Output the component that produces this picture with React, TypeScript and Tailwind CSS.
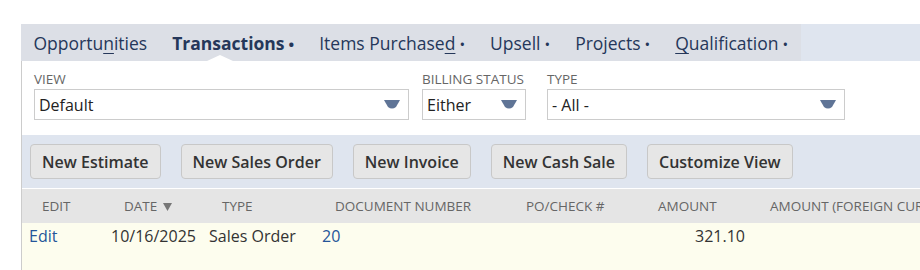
const tabs = [
  { pre: 'Opportu', u: 'n', post: 'ities', dot: false },
  { pre: 'Transactions', u: '', post: '', dot: true, active: true },
  { pre: 'Items Purchase', u: 'd', post: '', dot: true },
  { pre: 'Upsell', u: '', post: '', dot: true },
  { pre: 'Projects', u: '', post: '', dot: true },
  { pre: '', u: 'Q', post: 'ualification', dot: true },
];

const buttons = ['New Estimate', 'New Sales Order', 'New Invoice', 'New Cash Sale', 'Customize View'];

const cols = [
  { label: 'EDIT', w: 'w-[82px]' },
  { label: 'DATE', w: 'w-[98px]', sort: true },
  { label: 'TYPE', w: 'w-[113px]' },
  { label: 'DOCUMENT NUMBER', w: 'w-[191px]' },
  { label: 'PO/CHECK #', w: 'w-[132px]' },
  { label: 'AMOUNT', w: 'w-[112px]' },
  { label: 'AMOUNT (FOREIGN CURRENCY)', w: 'flex-1' },
];

const Arrow = () => (
  <svg width="16" height="9" viewBox="0 0 16 9" className="shrink-0">
    <path d="M0 0 H16 L12 7 Q8 10 4 7 Z" fill="#5f7496" />
  </svg>
);

const Select = ({ value, w }: { value: string; w: string }) => (
  <div className={`flex h-[31px] ${w} items-center justify-between border border-[#cccccc] bg-white pl-[4px] pr-[8px] text-[16px] text-[#222]`}>
    <span>{value}</span>
    <Arrow />
  </div>
);

export default function App() {
  return (
    <div className="min-h-[270px] w-[920px] overflow-hidden bg-white pt-[24px] pl-[21px] font-['Open_Sans',sans-serif]">
      {/* tab strip */}
      <div className="flex h-[37px] bg-[#dfe5ef]">
        <div className="flex bg-[#dcdfe6]">
          {tabs.map((t, i) => (
            <div
              key={i}
              className={`relative flex items-center px-[12.5px] pt-[2px] text-[17.5px] text-[#25375a] ${t.active ? 'font-bold' : ''}`}
            >
              <span>
                {t.pre}
                {t.u && <span className="underline underline-offset-[3px]">{t.u}</span>}
                {t.post}
                {t.dot && <span className="ml-[4px] text-[15px]">•</span>}
              </span>
              {t.active && (
                <div className="absolute bottom-0 left-[47px] h-0 w-0 border-x-[13px] border-b-[6px] border-x-transparent border-b-white" />
              )}
            </div>
          ))}
        </div>
      </div>

      <div className="border-l border-[#cccccc]">
        {/* filters */}
        <div className="flex h-[74px] gap-[13px] pl-[12px] pt-[9px]">
          <div className="flex flex-col">
            <span className="text-[13.5px] leading-[19px] text-[#666]">VIEW</span>
            <Select value="Default" w="w-[375px]" />
          </div>
          <div className="flex flex-col">
            <span className="text-[13.5px] leading-[19px] text-[#666]">BILLING STATUS</span>
            <Select value="Either" w="w-[104px]" />
          </div>
          <div className="ml-[8px] flex flex-col">
            <span className="text-[13.5px] leading-[19px] text-[#666]">TYPE</span>
            <Select value="- All -" w="w-[298px]" />
          </div>
        </div>

        {/* buttons */}
        <div className="flex h-[53px] items-center gap-[20px] bg-[#dfe5ef] pl-[8px]">
          {buttons.map((b) => (
            <div
              key={b}
              className="flex h-[35px] items-center rounded-[4px] border border-[#c8c8c8] bg-[#e6e6e6] px-[11px] text-[16px] font-semibold text-[#333]"
            >
              {b}
            </div>
          ))}
        </div>

        {/* header */}
        <div className="mt-[1px] flex h-[34px] items-center bg-[#e5e5e5] text-[13.5px] text-[#666]">
          {cols.map((c) => (
            <div key={c.label} className={`${c.w} flex shrink-0 items-center whitespace-nowrap pl-[20px]`}>
              {c.label}
              {c.sort && (
                <svg width="9" height="9" viewBox="0 0 9 9" className="ml-[6px]">
                  <path d="M0 1 H9 L4.5 9 Z" fill="#777" />
                </svg>
              )}
            </div>
          ))}
        </div>

        {/* row */}
        <div className="flex h-[60px] bg-[#fdfdee] pt-[1px] text-[16px] text-[#333]">
          <div className="w-[82px] shrink-0 pl-[7px] text-[#255599]">Edit</div>
          <div className="w-[98px] shrink-0 pl-[7px]">10/16/2025</div>
          <div className="w-[113px] shrink-0 pl-[7px]">Sales Order</div>
          <div className="w-[191px] shrink-0 pl-[7px] text-[#255599]">20</div>
          <div className="w-[132px] shrink-0" />
          <div className="w-[112px] shrink-0 pr-[5px] text-right">321.10</div>
          <div className="flex-1" />
        </div>
      </div>
    </div>
  );
}
